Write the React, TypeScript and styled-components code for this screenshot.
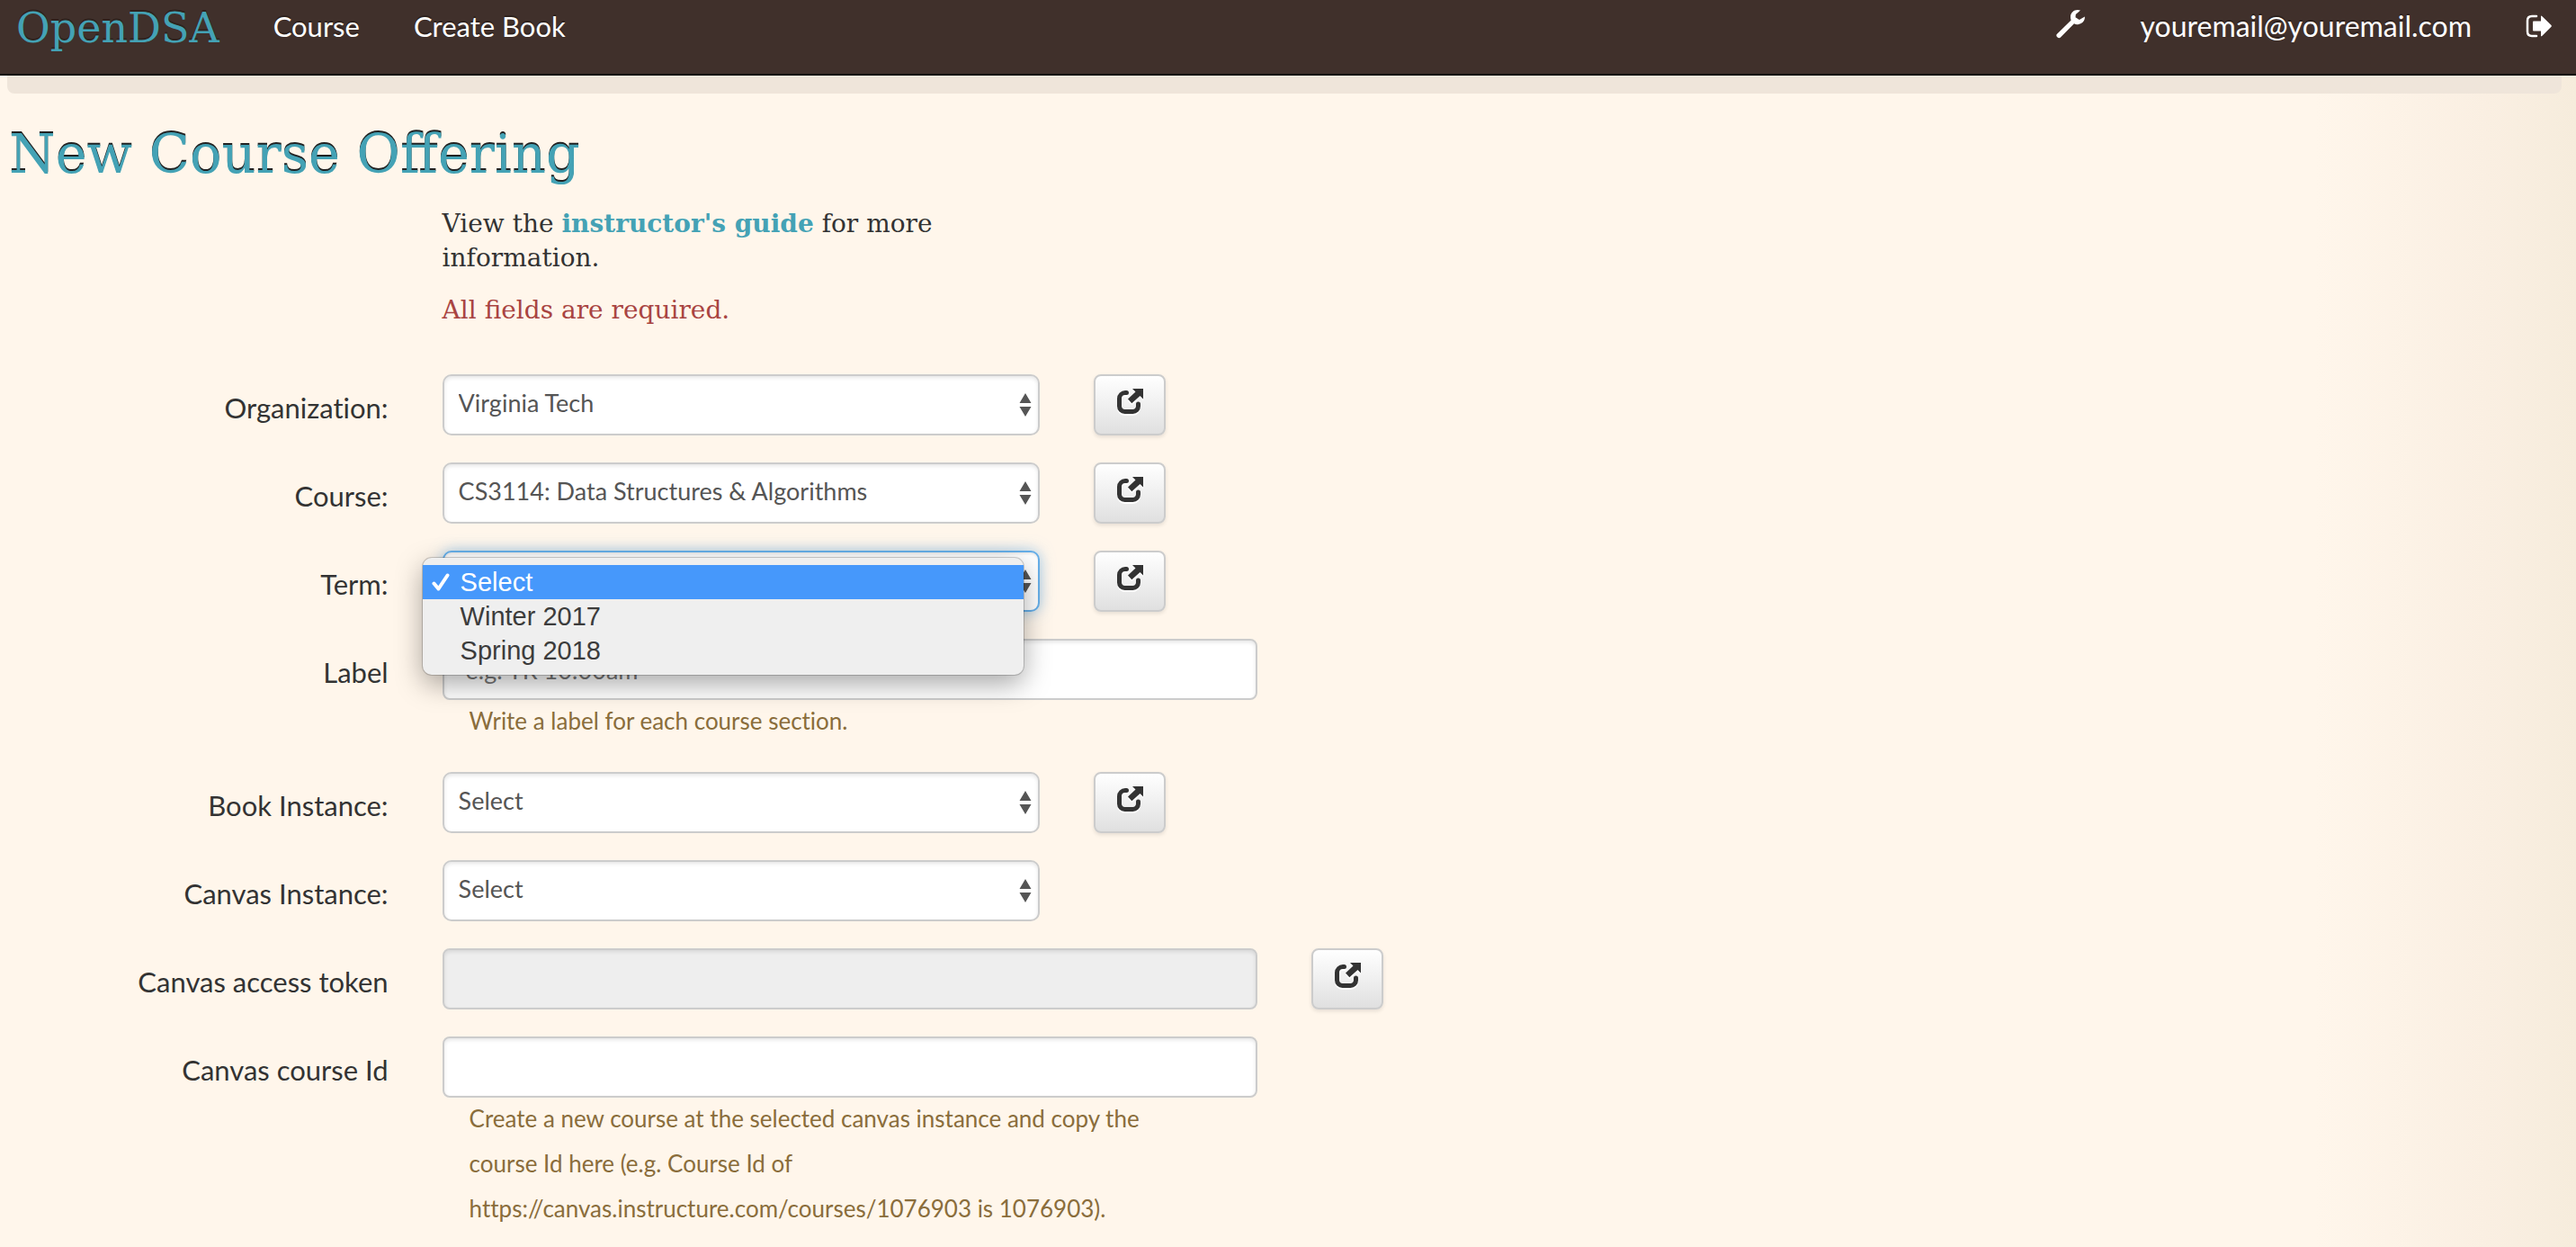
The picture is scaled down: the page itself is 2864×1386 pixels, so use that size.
import React from 'react';
import styled, { createGlobalStyle, css } from 'styled-components';

const sans = `Lato, "Noto Sans", sans-serif`;
const slab = `"DejaVu Serif", "Liberation Serif", serif`;

const GlobalStyle = createGlobalStyle`
  * { box-sizing: border-box; }
  body {
    margin: 0;
    min-height: 100vh;
    background: #fff6eb linear-gradient(to left, #f6ecdc 0, #faefe2 100px, #fff6eb 290px) no-repeat;
    color: #333;
    font-family: ${sans};
    font-size: 31px;
    font-variant-ligatures: none;
  }
`;

const Navbar = styled.header`
  display: flex;
  align-items: flex-start;
  justify-content: space-between;
  height: 84px;
  padding: 0 26px 0 18px;
  background: #40302b;
  border-bottom: 2px solid #080808;
  text-shadow: 0 -2px 0 rgba(0, 0, 0, 0.3);
`;

const NavGroup = styled.nav<{ $size: number }>`
  display: flex;
  align-items: center;
  gap: 60px;
  height: 58px;
  font-size: ${(p) => p.$size}px;
`;

const Brand = styled.a`
  padding-top: 4px;
  color: #44a2b5;
  font: 46px/58px ${slab};
  text-decoration: none;
`;

const NavLink = styled.a`
  display: flex;
  color: #fff;
  line-height: 58px;
  text-decoration: none;
`;

const Strip = styled.div`
  height: 20px;
  margin: 0 16px 0 8px;
  background: #efe5da;
  border-radius: 0 0 8px 8px;
`;

const Main = styled.main`
  padding: 0 10px;
`;

const Title = styled.h1`
  margin: 32px 0 0;
  color: #44a2b5;
  font: 59px/72px ${slab};
  text-shadow: 0 -2px 0 #222;
`;

const Form = styled.form`
  display: flex;
  flex-direction: column;
  gap: 30px;
`;

const Row = styled.div`
  display: grid;
  grid-template-columns: 15% minmax(0, 1fr);
  column-gap: 55px;
`;

const Intro = styled.div`
  grid-column: 2;
  max-width: 600px;
  padding: 22px 0 32px;
  font: 28px/38px ${slab};
  font-variant-ligatures: normal;

  p { margin: 0 0 20px; }
`;

const GuideLink = styled.a`
  color: #44a2b5;
  font-weight: bold;
  text-decoration: none;
`;

const Required = styled.p`
  color: #a94442;
`;

const Label = styled.label`
  padding: 17px 5px 0 0;
  line-height: 40px;
  text-align: right;
`;

const Controls = styled.div`
  display: flex;
  gap: 60px;
`;

const SelectBox = styled.div`
  position: relative;
  flex: 0 1 664px;
`;

const field = css`
  display: block;
  width: 100%;
  height: 68px;
  border: 2px solid #ccc;
  border-radius: 10px;
  background: #fff;
  box-shadow: inset 0 2px 4px rgba(0, 0, 0, 0.1);
  color: #555;
  font: 27px/40px ${sans};
`;

const Select = styled.select<{ $open?: boolean }>`
  ${field}
  appearance: none;
  padding: 8px 40px 12px 16px;
  outline: none;
  ${(p) =>
    p.$open &&
    css`
      border-color: #66afe9;
      box-shadow: inset 0 2px 2px rgba(0, 0, 0, 0.08), 0 0 16px rgba(102, 175, 233, 0.6);
    `}
`;

const Arrows = styled.svg`
  position: absolute;
  top: 21px;
  right: 9px;
  pointer-events: none;
`;

const TextInput = styled.input`
  ${field}
  flex: 0 1 906px;
  min-width: 0;
  max-width: 906px;
  border-radius: 8px;
  padding: 12px 24px;

  &::placeholder { color: #777; opacity: 1; }
  &:disabled { background: #eee; }
`;

const IconButton = styled.button`
  display: flex;
  flex: 0 0 80px;
  align-items: center;
  justify-content: center;
  height: 68px;
  padding: 0 0 8px;
  border: 2px solid #ccc;
  border-radius: 8px;
  background: linear-gradient(#fff, #e0e0e0);
  box-shadow: 0 2px 4px rgba(0, 0, 0, 0.1);
  color: #333;

  svg { filter: drop-shadow(0 2px 0 #fff); }
`;

const Help = styled.p`
  max-width: 830px;
  margin: -2px 0 2px;
  padding-left: 30px;
  color: #8a6d3b;
  font-size: 26px;
  line-height: 50px;
`;

const Menu = styled.ul`
  position: absolute;
  z-index: 2;
  top: 8px;
  left: -22px;
  right: 18px;
  margin: 0;
  padding: 8px 0;
  background: #efefef;
  border-radius: 10px;
  box-shadow: 0 0 0 1px rgba(0, 0, 0, 0.18), 0 10px 30px rgba(0, 0, 0, 0.35);
  list-style: none;
`;

const Option = styled.li<{ $active?: boolean }>`
  display: grid;
  grid-template-columns: 32px 1fr;
  align-items: center;
  padding: 0 10px;
  background: ${(p) => (p.$active ? '#4698fb' : 'transparent')};
  color: ${(p) => (p.$active ? '#fff' : '#3c3c3c')};
  font: 29px/38px "Liberation Sans", Arial, sans-serif;

  span { grid-column: 2; }
`;

const WrenchIcon = () => (
  <svg width="34" height="38" viewBox="0 0 34 38" fill="#fff" aria-hidden="true">
    <path d="M28 1.500C23-.5 17.500 2.500 17 8c-.1 1.700 0 3 .6 4.500L1.800 28c-1.800 1.900 1.800 5.600 3.900 3.800L21 16.300c1.300.8 2.800 1.100 4.200.9 4.600-.4 8.200-4 7.600-8.600l-6 3.300-4.300-2.700.3-3.200z" />
  </svg>
);

const SignOutIcon = () => (
  <svg width="30" height="26" viewBox="0 0 30 26" fill="none" aria-hidden="true">
    <path d="M12 2H7Q2 2 2 7v12q0 5 5 5h5" stroke="#fff" strokeWidth="2.500" strokeLinecap="round" />
    <path d="M8 8.500q0-1 1-1h8V2.500q0-1.500 1.200-.6L28.500 12q.8.900 0 1.800L18.200 24q-1.200.9-1.200-.6V18.500H9q-1 0-1-1z" fill="#fff" />
  </svg>
);

const ShareIcon = () => (
  <svg width="32" height="30" viewBox="0 0 32 30" fill="none" aria-hidden="true">
    <path
      d="M12.500 5.500H11A6.500 6.500 0 0 0 4.500 12v8.500a6 6 0 0 0 6 6h9a6 6 0 0 0 6-6V18"
      stroke="currentColor"
      strokeWidth="5"
      strokeLinecap="round"
    />
    <path d="M19 1h12v11.500l-3.500-3.500L18.300 17.300 14 12.600 22.500 4.500z" fill="currentColor" />
  </svg>
);

const CheckIcon = () => (
  <svg width="20" height="20" viewBox="0 0 20 20" fill="none" aria-hidden="true">
    <path d="M2.500 11.500l5 6L17.500 2.500" stroke="#fff" strokeWidth="4" strokeLinecap="round" strokeLinejoin="round" />
  </svg>
);

interface SelectFieldProps {
  id: string;
  label: string;
  value: string;
  action?: string;
  menu?: string[];
}

function SelectField({ id, label, value, action, menu }: SelectFieldProps) {
  return (
    <Row>
      <Label htmlFor={id}>{label}</Label>
      <Controls>
        <SelectBox>
          <Select id={id} $open={!!menu} defaultValue={value}>
            {(menu || [value]).map((o) => (
              <option key={o}>{o}</option>
            ))}
          </Select>
          <Arrows width="14" height="26" viewBox="0 0 14 26" fill="#555" aria-hidden="true">
            <path d="M7 0l6.500 11H.5zM.5 15h13L7 26z" />
          </Arrows>
          {menu && (
            <Menu role="listbox" aria-label={label}>
              {menu.map((o) => (
                <Option key={o} role="option" aria-selected={o === value} $active={o === value}>
                  {o === value && <CheckIcon />}
                  <span>{o}</span>
                </Option>
              ))}
            </Menu>
          )}
        </SelectBox>
        {action && (
          <IconButton type="button" aria-label={action}>
            <ShareIcon />
          </IconButton>
        )}
      </Controls>
    </Row>
  );
}

interface TextFieldProps {
  id: string;
  label: string;
  placeholder?: string;
  disabled?: boolean;
  action?: string;
  help?: string;
}

function TextField({ id, label, placeholder, disabled, action, help }: TextFieldProps) {
  return (
    <Row>
      <Label htmlFor={id}>{label}</Label>
      <div>
        <Controls>
          <TextInput id={id} type="text" placeholder={placeholder} disabled={disabled} />
          {action && (
            <IconButton type="button" aria-label={action}>
              <ShareIcon />
            </IconButton>
          )}
        </Controls>
        {help && <Help>{help}</Help>}
      </div>
    </Row>
  );
}

export default function App() {
  return (
    <>
      <GlobalStyle />
      <Navbar>
        <NavGroup $size={31}>
          <Brand href="#">OpenDSA</Brand>
          <NavLink href="#">Course</NavLink>
          <NavLink href="#">Create Book</NavLink>
        </NavGroup>
        <NavGroup $size={32}>
          <NavLink href="#" aria-label="Admin"><WrenchIcon /></NavLink>
          <NavLink href="#">youremail@youremail.com</NavLink>
          <NavLink href="#" aria-label="Sign out"><SignOutIcon /></NavLink>
        </NavGroup>
      </Navbar>
      <Strip />
      <Main>
        <Title>New Course Offering</Title>
        <Row>
          <Intro>
            <p>
              View the <GuideLink href="#">instructor's guide</GuideLink> for more information.
            </p>
            <Required>All fields are required.</Required>
          </Intro>
        </Row>
        <Form>
          <SelectField id="organization" label="Organization:" value="Virginia Tech" action="Add organization" />
          <SelectField id="course" label="Course:" value="CS3114: Data Structures & Algorithms" action="Add course" />
          <SelectField
            id="term"
            label="Term:"
            value="Select"
            action="Add term"
            menu={['Select', 'Winter 2017', 'Spring 2018']}
          />
          <TextField
            id="section"
            label="Label"
            placeholder="e.g. TR 10:00am"
            help="Write a label for each course section."
          />
          <SelectField id="book" label="Book Instance:" value="Select" action="Add book instance" />
          <SelectField id="canvas" label="Canvas Instance:" value="Select" />
          <TextField id="token" label="Canvas access token" disabled action="Add access token" />
          <TextField
            id="course-id"
            label="Canvas course Id"
            help="Create a new course at the selected canvas instance and copy the course Id here (e.g. Course Id of https://canvas.instructure.com/courses/1076903 is 1076903)."
          />
        </Form>
      </Main>
    </>
  );
}
